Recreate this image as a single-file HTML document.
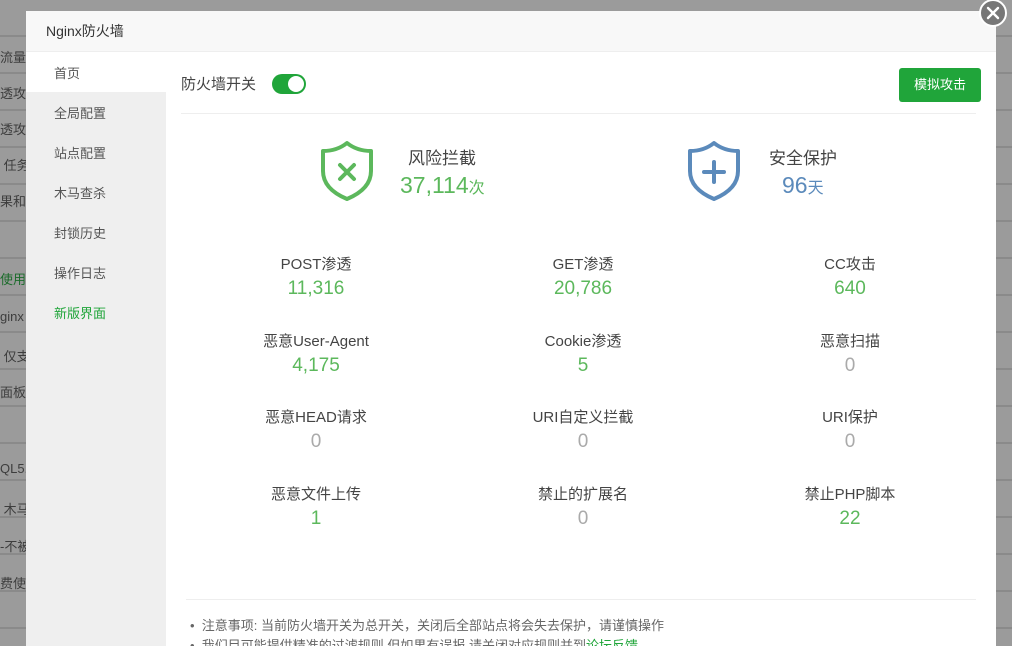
<!DOCTYPE html>
<html><head><meta charset="utf-8"><style>
*{margin:0;padding:0;box-sizing:border-box}
html,body{width:1012px;height:646px;overflow:hidden}
body{position:relative;font-family:"Liberation Sans","Noto Sans CJK SC",sans-serif;background:#9b9b9b;background-image:repeating-linear-gradient(180deg,transparent 0,transparent 35px,#8a8a8a 35px,#8a8a8a 37px);}
.bgt{position:absolute;left:0;font-size:13px;color:#3d3d3d;white-space:nowrap}
.modal{position:absolute;left:26px;top:11px;width:970px;height:635px;background:#fff;overflow:hidden}
.hd{height:41px;background:#f8f8f8;border-bottom:1px solid #eee;font-size:14px;color:#333;line-height:41px;padding-left:20px}
.side{position:absolute;left:0;top:41px;width:140px;height:600px;background:#efefef}
.side div{height:40px;line-height:44px;padding-left:28px;font-size:13px;color:#555}
.side div.on{background:#fff}
.side div.g{color:#20a53a}
.abs{position:absolute}
.tog{position:absolute;left:246px;top:63px;width:34px;height:20px;border-radius:10px;background:#20a53a}
.tog:after{content:"";position:absolute;right:2px;top:2px;width:16px;height:16px;border-radius:50%;background:#fff}
.btn{position:absolute;left:873px;top:57px;width:82px;height:34px;background:#20a53a;border-radius:3px;color:#fff;font-size:13px;text-align:center;line-height:34px}
.st{position:absolute;width:200px;text-align:center}
.st .l{font-size:15px;color:#444;height:24px;line-height:24px}
.st .v{font-size:19px;color:#5cb85c;line-height:24px}
.st .z{color:#aaa}
.close{position:absolute;left:979px;top:-1px;width:28px;height:28px;border-radius:50%;background:#777;border:2px solid #fff}
</style></head><body>
<div class="bgt" style="top:47px">流量</div>
<div class="bgt" style="top:83px">透攻击</div>
<div class="bgt" style="top:119px">透攻击</div>
<div class="bgt" style="top:155px">&nbsp;任务</div>
<div class="bgt" style="top:191px">果和</div>
<div class="bgt" style="top:269px;color:#1a6b2a">使用</div>
<div class="bgt" style="top:309px">ginx</div>
<div class="bgt" style="top:346px">&nbsp;仅支</div>
<div class="bgt" style="top:382px">面板，</div>
<div class="bgt" style="top:461px">QL5.5</div>
<div class="bgt" style="top:499px">&nbsp;木马</div>
<div class="bgt" style="top:536px">-不被</div>
<div class="bgt" style="top:573px">费使用</div>
<div class="modal">
<div class="hd">Nginx防火墙</div>
<div class="side"><div class="on">首页</div><div>全局配置</div><div>站点配置</div><div>木马查杀</div><div>封锁历史</div><div>操作日志</div><div class="g">新版界面</div></div>
<div class="abs" style="left:155px;top:63px;font-size:15px;color:#444;line-height:22px">防火墙开关</div>
<div class="tog"></div>
<div class="btn">模拟攻击</div>
<div class="abs" style="left:155px;top:102px;width:795px;height:1px;background:#eee"></div>
<svg class="abs" style="left:294px;top:129px" width="54" height="62" viewBox="0 0 54 62"><path d="M27 3 Q37 11 51 11 V31 Q51 49 27 59 Q3 49 3 31 V11 Q17 11 27 3Z" fill="none" stroke="#5cb85c" stroke-width="4" stroke-linejoin="round"/><path d="M20 25 L34 39 M34 25 L20 39" stroke="#5cb85c" stroke-width="4" stroke-linecap="round"/></svg>
<div class="abs" style="left:382px;top:133px;font-size:17px;color:#444">风险拦截</div>
<div class="abs" style="left:374px;top:161px;font-size:23px;color:#5cb85c">37,114<span style="font-size:16px">次</span></div>
<svg class="abs" style="left:661px;top:129px" width="54" height="62" viewBox="0 0 54 62"><path d="M27 3 Q37 11 51 11 V31 Q51 49 27 59 Q3 49 3 31 V11 Q17 11 27 3Z" fill="none" stroke="#5b8abb" stroke-width="4" stroke-linejoin="round"/><path d="M27 22 V42 M17 32 H37" stroke="#5b8abb" stroke-width="4" stroke-linecap="round"/></svg>
<div class="abs" style="left:743px;top:133px;font-size:17px;color:#444">安全保护</div>
<div class="abs" style="left:756px;top:161px;font-size:23px;color:#5b8abb">96<span style="font-size:16px">天</span></div>

<div class="st" style="left:190px;top:242px"><div class="l">POST渗透</div><div class="v">11,316</div></div>
<div class="st" style="left:457px;top:242px"><div class="l">GET渗透</div><div class="v">20,786</div></div>
<div class="st" style="left:724px;top:242px"><div class="l">CC攻击</div><div class="v">640</div></div>
<div class="st" style="left:190px;top:319px"><div class="l">恶意User-Agent</div><div class="v">4,175</div></div>
<div class="st" style="left:457px;top:319px"><div class="l">Cookie渗透</div><div class="v">5</div></div>
<div class="st" style="left:724px;top:319px"><div class="l">恶意扫描</div><div class="v z">0</div></div>
<div class="st" style="left:190px;top:395px"><div class="l">恶意HEAD请求</div><div class="v z">0</div></div>
<div class="st" style="left:457px;top:395px"><div class="l">URI自定义拦截</div><div class="v z">0</div></div>
<div class="st" style="left:724px;top:395px"><div class="l">URI保护</div><div class="v z">0</div></div>
<div class="st" style="left:190px;top:472px"><div class="l">恶意文件上传</div><div class="v">1</div></div>
<div class="st" style="left:457px;top:472px"><div class="l">禁止的扩展名</div><div class="v z">0</div></div>
<div class="st" style="left:724px;top:472px"><div class="l">禁止PHP脚本</div><div class="v">22</div></div>

<div class="abs" style="left:160px;top:588px;width:790px;height:1px;background:#eee"></div>
<div class="abs" style="left:164px;top:605px;font-size:13px;color:#666;line-height:20px;white-space:nowrap">
<div>•&nbsp;&nbsp;注意事项: 当前防火墙开关为总开关，关闭后全部站点将会失去保护，请谨慎操作</div>
<div>•&nbsp;&nbsp;我们目可能提供精准的过滤规则,但如果有误报,请关闭对应规则并到<span style="color:#20a53a">论坛反馈</span></div>
</div>
</div>
<div class="close"><svg width="24" height="24" viewBox="0 0 24 24"><path d="M7 7 L17 17 M17 7 L7 17" stroke="#fff" stroke-width="2.4" stroke-linecap="round"/></svg></div>
</body></html>
